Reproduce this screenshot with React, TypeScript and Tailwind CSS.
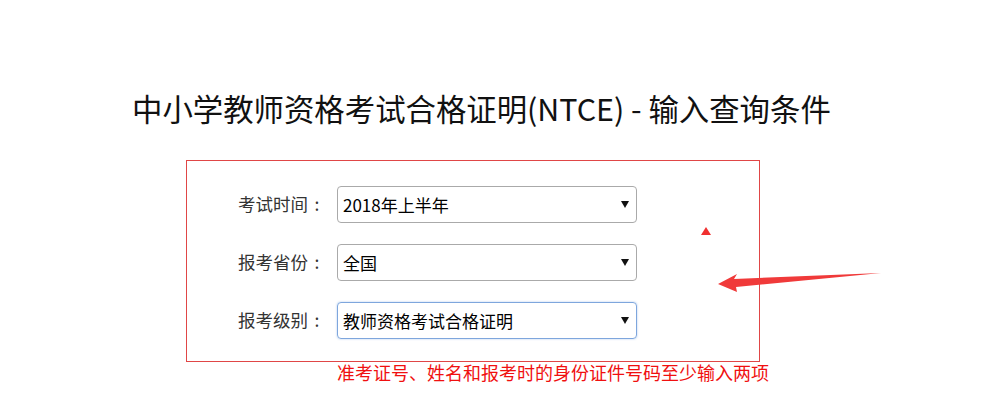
import React from "react";

const font = { fontFamily: '"Noto Sans CJK SC", "Noto Sans", sans-serif' };

const rows = [
  { label: "考试时间", value: "2018年上半年", focus: false },
  { label: "报考省份", value: "全国", focus: false },
  { label: "报考级别", value: "教师资格考试合格证明", focus: true },
];

const App: React.FC = () => {
  return (
    <div className="relative min-h-[399px] w-full bg-white text-black" style={font}>
      <div className="pl-[132px] pt-[88px]">
        {/* 标题 */}
        <h1 className="text-[30.4px] leading-[40px] text-[#111]">
          中小学教师资格考试合格证明(NTCE) - 输入查询条件
        </h1>

        {/* 查询条件 */}
        <div className="ml-[54px] mt-[32px] flex h-[202px] w-[574px] flex-col gap-[21px] border border-[#e04646] pt-[25px]">
          {rows.map((r) => (
            <div key={r.label} className="flex items-center">
              <label className="flex w-[150px] justify-end pr-[11px] text-[17.5px] text-[#333]">
                <span>{r.label}</span>
                <span className="w-[18px] text-center">:</span>
              </label>
              <div
                className={
                  r.focus
                    ? "flex h-[37px] w-[300px] items-center justify-between rounded-[4px] border border-[#7ea6dd] pl-[5px] pr-[7px] text-[17px] shadow-[0_0_2px_rgba(80,140,220,0.5)]"
                    : "flex h-[37px] w-[300px] items-center justify-between rounded-[4px] border border-[#aaa] pl-[5px] pr-[7px] text-[17px]"
                }
              >
                <span>{r.value}</span>
                <svg width="8" height="7" viewBox="0 0 8 7">
                  <polygon points="0,0 8,0 4,7" fill="#111" />
                </svg>
              </div>
            </div>
          ))}
        </div>

        <p className="ml-[205px] -mt-[2px] text-[18px] leading-[24px] text-[#f01010]">
          准考证号、姓名和报考时的身份证件号码至少输入两项
        </p>
      </div>

      {/* 红色标注 */}
      <svg className="absolute left-0 top-0" width="1001" height="399" viewBox="0 0 1001 399">
        <polygon points="706,227 711,235 701,235" fill="#f03030" />
        <polygon
          points="718,284 737,274 734,279 881,273 736,287 737,292"
          fill="#f03a3a"
        />
      </svg>
    </div>
  );
};

export default App;
